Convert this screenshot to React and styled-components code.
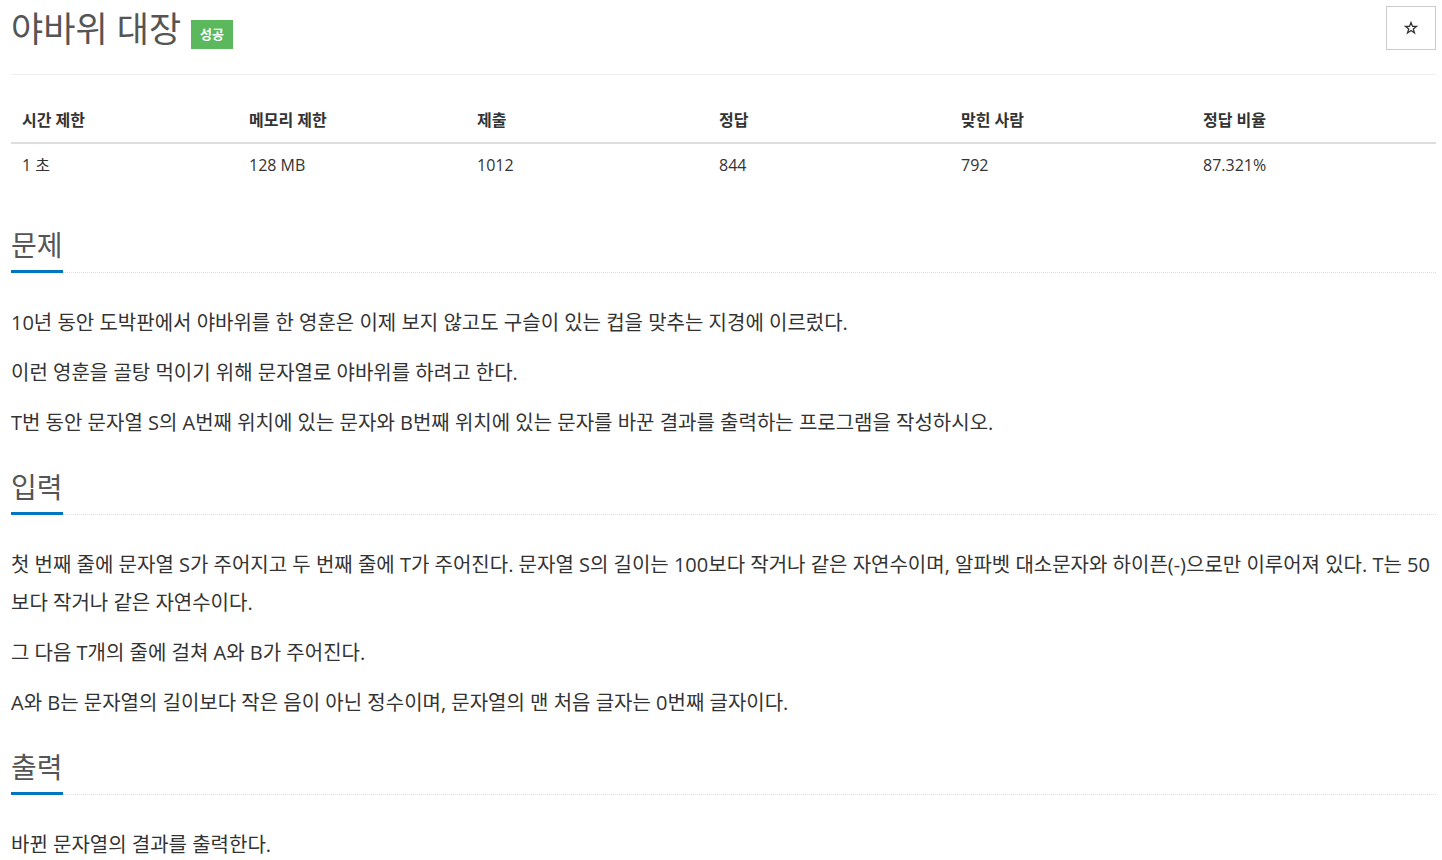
import React from "react";
import styled, { createGlobalStyle } from "styled-components";

const GlobalStyle = createGlobalStyle`
  body {
    margin: 0;
    background: #fff;
    font-family: "Open Sans", "Noto Sans CJK KR", sans-serif;
    color: #333;
  }
`;

const stats = [
  { label: "시간 제한", value: "1 초" },
  { label: "메모리 제한", value: "128 MB" },
  { label: "제출", value: "1012" },
  { label: "정답", value: "844" },
  { label: "맞힌 사람", value: "792" },
  { label: "정답 비율", value: "87.321%" },
];

const sections = [
  {
    title: "문제",
    paragraphs: [
      "10년 동안 도박판에서 야바위를 한 영훈은 이제 보지 않고도 구슬이 있는 컵을 맞추는 지경에 이르렀다.",
      "이런 영훈을 골탕 먹이기 위해 문자열로 야바위를 하려고 한다.",
      "T번 동안 문자열 S의 A번째 위치에 있는 문자와 B번째 위치에 있는 문자를 바꾼 결과를 출력하는 프로그램을 작성하시오.",
    ],
  },
  {
    title: "입력",
    paragraphs: [
      "첫 번째 줄에 문자열 S가 주어지고 두 번째 줄에 T가 주어진다. 문자열 S의 길이는 100보다 작거나 같은 자연수이며, 알파벳 대소문자와 하이픈(-)으로만 이루어져 있다. T는 50보다 작거나 같은 자연수이다.",
      "그 다음 T개의 줄에 걸쳐 A와 B가 주어진다.",
      "A와 B는 문자열의 길이보다 작은 음이 아닌 정수이며, 문자열의 맨 처음 글자는 0번째 글자이다.",
    ],
  },
  {
    title: "출력",
    paragraphs: ["바뀐 문자열의 결과를 출력한다."],
  },
];

function App() {
  return (
    <>
      <GlobalStyle />
      <Page>
        <Header>
          <Title>
            야바위 대장 <Badge>성공</Badge>
          </Title>
          <StarButton type="button">
            <svg width="14" height="14" viewBox="0 0 24 24" fill="none" stroke="#333" strokeWidth="2.2" strokeLinejoin="miter">
              <polygon points="12,2.5 14.6,9.2 21.6,9.2 15.9,13.6 18,20.6 12,16.4 6,20.6 8.1,13.6 2.4,9.2 9.4,9.2" />
            </svg>
          </StarButton>
        </Header>

        <Stats>
          {stats.map((s) => (
            <HeadCell key={s.label}>{s.label}</HeadCell>
          ))}
          {stats.map((s) => (
            <Cell key={s.label}>{s.value}</Cell>
          ))}
        </Stats>

        {sections.map((sec) => (
          <Section key={sec.title}>
            <SectionHead>
              <SectionTitle>{sec.title}</SectionTitle>
            </SectionHead>
            <Body>
              {sec.paragraphs.map((p, i) => (
                <P key={i}>{p}</P>
              ))}
            </Body>
          </Section>
        ))}
      </Page>
    </>
  );
}

export default App;

const Page = styled.div`
  padding: 0 6px 0 11px;
`;

const Header = styled.div`
  display: flex;
  justify-content: space-between;
  align-items: flex-start;
  padding-top: 6px;
  height: 68px;
  border-bottom: 1px solid #eee;
`;

const Title = styled.h1`
  margin: 0;
  padding-top: 2px;
  font-size: 35px;
  font-weight: 400;
  color: #555;
  line-height: 42px;
  display: flex;
  align-items: center;
`;

const Badge = styled.span`
  display: inline-block;
  margin-left: 10px;
  margin-top: 11px;
  background: #5cb85c;
  color: #fff;
  font-size: 13px;
  font-weight: 700;
  line-height: 29px;
  height: 29px;
  padding: 0 9px;
`;

const StarButton = styled.button`
  width: 50px;
  height: 44px;
  border: 1px solid #ccc;
  background: #fff;
  padding: 0;
  display: flex;
  align-items: center;
  justify-content: center;
`;

const Stats = styled.div`
  display: grid;
  grid-template-columns: 227px 228px 242px 242px 242px 1fr;
  margin-top: 25px;
  font-size: 16px;
`;

const HeadCell = styled.div`
  padding: 7px 11px 8px;
  line-height: 27px;
  font-weight: 700;
  color: #333;
  border-bottom: 2px solid #ddd;
`;

const Cell = styled.div`
  padding: 8px 11px 7px;
  line-height: 27px;
  color: #333;
`;

const Section = styled.section`
  margin-top: 38px;
  & + & {
    margin-top: 24px;
  }
`;

const SectionHead = styled.div`
  border-bottom: 1px dotted #ddd;
`;

const SectionTitle = styled.h2`
  display: inline-block;
  margin: 0 0 -1px;
  font-size: 28px;
  font-weight: 400;
  color: #555;
  line-height: 42px;
  padding-bottom: 4px;
  border-bottom: 3px solid #0076c0;
`;

const Body = styled.div`
  padding-top: 31px;
`;

const P = styled.p`
  margin: 0 0 12px;
  font-size: 20px;
  line-height: 38px;
  color: #333;
`;
